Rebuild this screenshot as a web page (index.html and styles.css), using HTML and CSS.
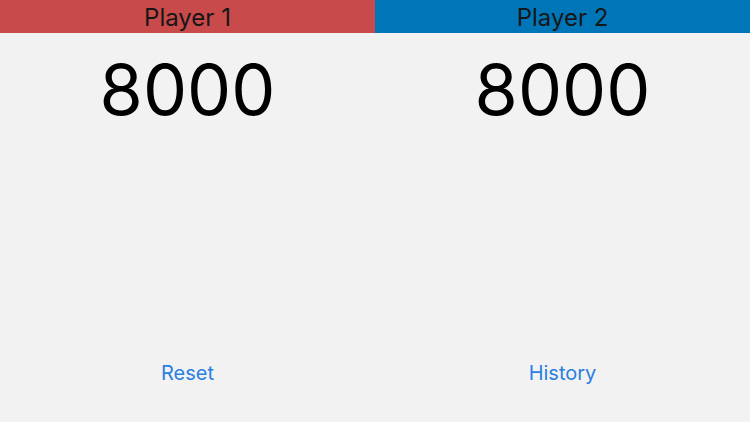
FILE: index.html
```html
<!DOCTYPE html>
<html>
<head>
<meta charset="utf-8">
<link rel="stylesheet" href="styles.css">
</head>
<body>
<div class="app">
  <section class="player">
    <header class="bar red">Player 1</header>
    <div class="life">8000</div>
    <button class="link">Reset</button>
  </section>
  <section class="player">
    <header class="bar blue">Player 2</header>
    <div class="life">8000</div>
    <button class="link">History</button>
  </section>
</div>
</body>
</html>
```
FILE: styles.css
```css
html, body {
  margin: 0;
  padding: 0;
  background: #f2f2f2;
  font-family: Inter, "Liberation Sans", Arial, sans-serif;
}
.app {
  display: flex;
  width: 750px;
  height: 422px;
}
.player {
  flex: 1;
  display: flex;
  flex-direction: column;
  align-items: center;
}
.bar {
  align-self: stretch;
  height: 31px;
  padding-top: 2px;
  line-height: 31px;
  text-align: center;
  font-size: 24px;
  color: #161616;
}
.red { background: #c94a4a; }
.blue { background: #0076b9; }
.life {
  margin-top: 22px;
  font-size: 70px;
  line-height: 70px;
  color: #000;
}
.link {
  margin-top: auto;
  margin-bottom: 39px;
  background: none;
  border: 0;
  padding: 0;
  font-family: Inter, "Liberation Sans", Arial, sans-serif;
  font-size: 20px;
  line-height: 20px;
  color: #2b7fe0;
}
```
